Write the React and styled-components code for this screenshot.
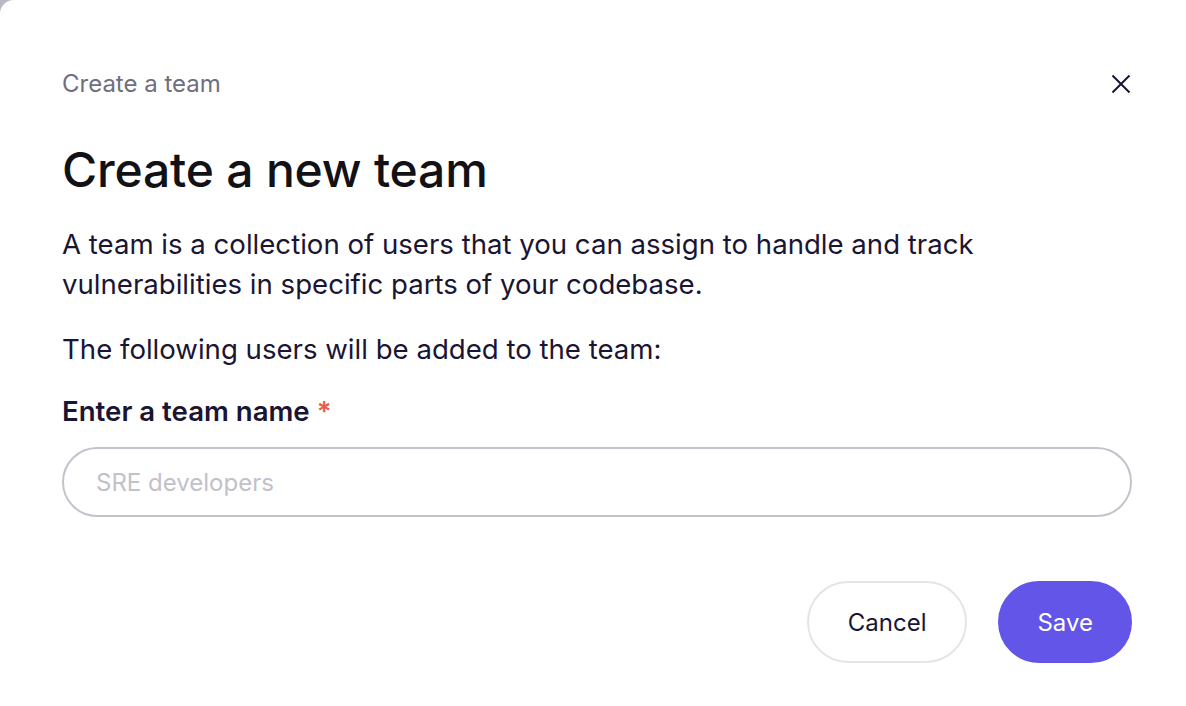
import React, { useState } from 'react';
import styled, { createGlobalStyle } from 'styled-components';

const GlobalStyle = createGlobalStyle`
	html, body {
		margin: 0;
		padding: 0;
		background: #b9b9c1;
		font-family: Inter, "Noto Sans", sans-serif;
	}
	* {
		box-sizing: border-box;
	}
`;

const Modal = styled.div`
	width: 1186px;
	height: 706px;
	background: #fff;
	border-top-left-radius: 14px;
	padding: 68px 54px 0 62px;
	display: flex;
	flex-direction: column;
`;

const Header = styled.div`
	display: flex;
	align-items: center;
	justify-content: space-between;
	height: 32px;
`;

const Crumb = styled.span`
	font-size: 24px;
	line-height: 32px;
	color: #6f6e80;
`;

const CloseButton = styled.button`
	border: 0;
	background: transparent;
	padding: 0;
	width: 24px;
	height: 24px;
	margin-right: -1px;
	display: flex;
	align-items: center;
	justify-content: center;
	cursor: pointer;
	color: #1a1533;
`;

const Title = styled.h1`
	margin: 42px 0 0;
	font-size: 48px;
	line-height: 56px;
	font-weight: 500;
	color: #111116;
	letter-spacing: -0.2px;
`;

const Text = styled.p`
	margin: ${(p) => p.$gap}px 0 0;
	font-size: 27.6px;
	line-height: 40px;
	color: #1a1533;
`;

const Label = styled.label`
	display: block;
	margin-top: 22px;
	font-size: 27.6px;
	line-height: 40px;
	font-weight: 600;
	color: #1a1533;

	span {
		color: #ee5a45;
	}
`;

const Input = styled.input`
	margin-top: 16px;
	width: 100%;
	height: 70px;
	border: 2px solid #c4c3cc;
	border-radius: 35px;
	padding: 0 32px;
	font-family: inherit;
	font-size: 24px;
	color: #1a1533;
	outline: none;

	&::placeholder {
		color: #c2c1ca;
	}
`;

const Footer = styled.div`
	margin-top: 64px;
	display: flex;
	justify-content: flex-end;
	gap: 31px;
`;

const Button = styled.button`
	height: 82px;
	padding: 0 ${(p) => (p.$primary ? 37 : 39)}px;
	border-radius: 41px;
	font-family: inherit;
	font-size: 24px;
	cursor: pointer;
	border: 2px solid ${(p) => (p.$primary ? '#6355e8' : '#e4e4ea')};
	background: ${(p) => (p.$primary ? '#6355e8' : '#fff')};
	color: ${(p) => (p.$primary ? '#fff' : '#1a1533')};
`;

function App() {
	const [name, setName] = useState('');

	return (
		<>
			<GlobalStyle />
			<Modal>
				<Header>
					<Crumb>Create a team</Crumb>
					<CloseButton aria-label="Close">
						<svg width="20" height="20" viewBox="0 0 20 20" fill="none">
							<path d="M1.5 1.5L18.5 18.5M18.5 1.5L1.5 18.5" stroke="currentColor" strokeWidth="2" />
						</svg>
					</CloseButton>
				</Header>

				<Title>Create a new team</Title>

				<Text $gap={26}>
					A team is a collection of users that you can assign to handle and track
					<br />
					vulnerabilities in specific parts of your codebase.
				</Text>
				<Text $gap={25}>The following users will be added to the team:</Text>

				<Label htmlFor="team-name">
					Enter a team name <span>*</span>
				</Label>
				<Input
					id="team-name"
					placeholder="SRE developers"
					value={name}
					onChange={(e) => setName(e.target.value)}
				/>

				<Footer>
					<Button>Cancel</Button>
					<Button $primary>Save</Button>
				</Footer>
			</Modal>
		</>
	);
}

export default App;
